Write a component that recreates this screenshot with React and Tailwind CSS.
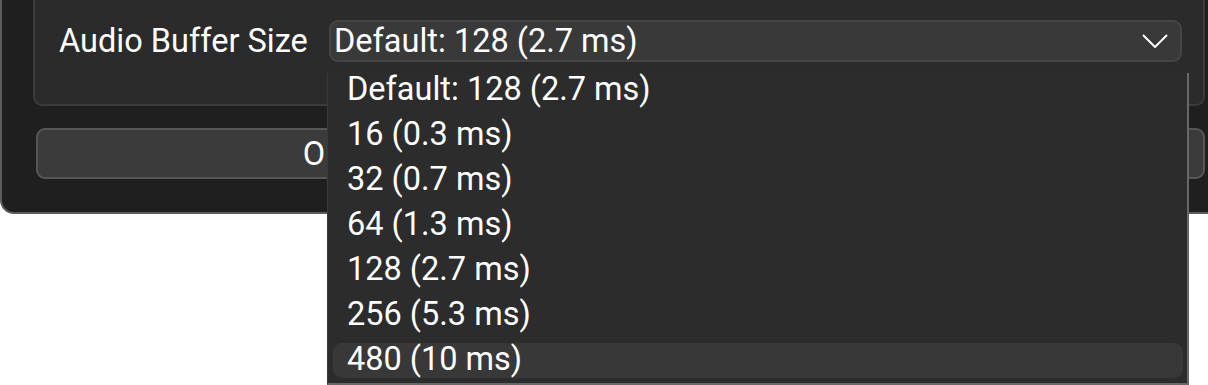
import React from 'react';

const options = [
  'Default: 128 (2.7 ms)',
  '16 (0.3 ms)',
  '32 (0.7 ms)',
  '64 (1.3 ms)',
  '128 (2.7 ms)',
  '256 (5.3 ms)',
  '480 (10 ms)',
];

const App = () => {
  return (
    <div className="relative w-full h-[385px] overflow-hidden bg-white font-['Roboto','Liberation_Sans',sans-serif] text-white">
      {/* Dialog window (top cut off) */}
      <div className="w-[1238px] h-[214px] bg-[#1f1f1f] border-l-2 border-b-2 border-[#5c5c5c] rounded-bl-[14px] flex flex-col pl-[31px] pr-[33px]">
        {/* Group box */}
        <div className="h-[126px] -mt-[20px] pt-[40px] bg-[#2b2b2b] border-2 border-t-0 border-[#3a3a3a] rounded-b-[9px] flex items-start pl-[24px] pr-[21px]">
          <span className="text-[32.5px] leading-[42px] w-[270px] shrink-0">Audio Buffer Size</span>
          <div className="flex-1 h-[42px] bg-[#393939] border-2 border-[#454545] rounded-[9px] flex items-center justify-between pl-[3px] pr-[12px]">
            <span className="text-[32.5px] leading-none pt-[1px]">Default: 128 (2.7 ms)</span>
            <svg width="26" height="14" viewBox="0 0 26 14" fill="none" stroke="#ffffff" strokeWidth="2">
              <polyline points="1,1 13,13 25,1" />
            </svg>
          </div>
        </div>

        {/* Buttons */}
        <div className="flex gap-[10px] mt-[22px] ml-[3px]">
          <button className="flex-1 h-[51px] bg-[#3b3b3b] border-2 border-[#565656] rounded-[9px] text-[32.5px] pr-[6px]">OK</button>
          <button className="flex-1 h-[51px] bg-[#3b3b3b] border-2 border-[#565656] rounded-[9px] text-[32.5px]">Cancel</button>
        </div>
      </div>

      {/* Dropdown popup */}
      <div className="absolute left-[327px] top-[73px] w-[862px] h-[312px] bg-[#2c2c2c] border-l border-[#3a3a3a] border-r-2 border-r-[#686868] border-b-2 border-b-[#686868] flex flex-col gap-[10px] pl-[5px] pr-[4px]">
        {options.map((o, i) => (
          <div
            key={o}
            className={
              i === options.length - 1
                ? 'h-[35px] shrink-0 flex items-center pl-[14px] pb-[3px] rounded-[9px] bg-[#383838] text-[32.5px]'
                : 'h-[35px] shrink-0 flex items-center pl-[14px] pb-[3px] text-[32.5px]'
            }
          >
            {o}
          </div>
        ))}
      </div>
    </div>
  );
};

export default App;
